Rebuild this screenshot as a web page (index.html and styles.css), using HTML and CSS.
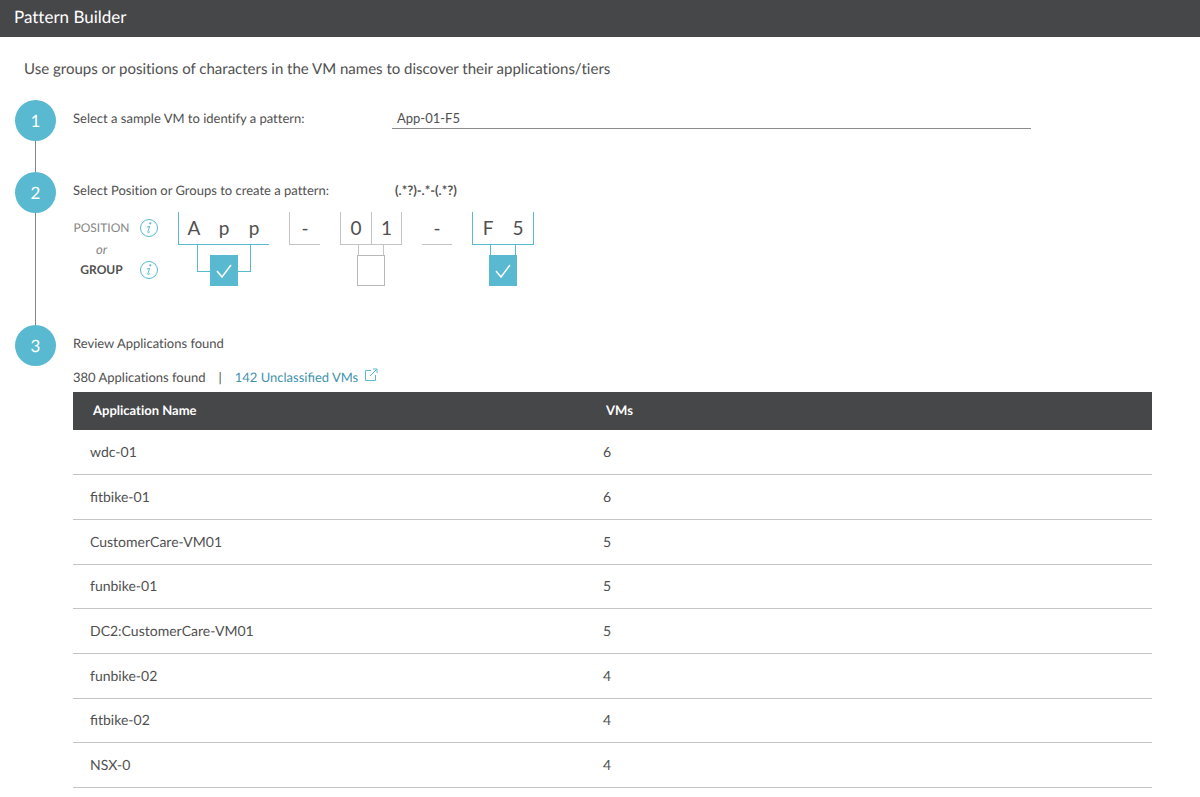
FILE: index.html
```html
<!DOCTYPE html>
<html lang="en">
<head>
<meta charset="utf-8">
<meta name="viewport" content="width=device-width, initial-scale=1">
<title>Pattern Builder</title>
<link rel="stylesheet" href="styles.css">
</head>
<body>
<header class="titlebar"><h1 class="title">Pattern Builder</h1></header>
<main class="page">
  <p class="intro">Use groups or positions of characters in the VM names to discover their applications/tiers</p>

  <section class="step step-sample">
    <div class="rail"><span class="badge">1</span><span class="line"></span></div>
    <div class="body pair">
      <label class="label" for="sample">Select a sample VM to identify a pattern:</label>
      <input class="field" id="sample" type="text" value="App-01-F5">
    </div>
  </section>

  <section class="step step-pattern">
    <div class="rail"><span class="badge">2</span><span class="line"></span></div>
    <div class="body">
      <div class="pair">
        <h2 class="label">Select Position or Groups to create a pattern:</h2>
        <output class="regex">(.*?)-.*-(.*?)</output>
      </div>
      <div class="builder">
        <div class="legend">
          <span class="mode">POSITION</span>
          <button class="info" type="button" aria-label="About positions">
            <svg width="20" height="20" viewBox="0 0 20 20"><circle cx="10" cy="10" r="8.5"/><path class="dot" d="M11.4 4.2a1.1 1.1 0 1 1-.1 2.2 1.1 1.1 0 0 1 .1-2.2z"/><path class="stem" d="M7.8 9.1l2.8-.7-1.7 5.4c-.2 1.3.8.9 2.2-.5"/></svg>
          </button>
          <span class="mode mode-or">or</span><span></span>
          <span class="mode mode-group">GROUP</span>
          <button class="info" type="button" aria-label="About groups">
            <svg width="20" height="20" viewBox="0 0 20 20"><circle cx="10" cy="10" r="8.5"/><path class="dot" d="M11.4 4.2a1.1 1.1 0 1 1-.1 2.2 1.1 1.1 0 0 1 .1-2.2z"/><path class="stem" d="M7.8 9.1l2.8-.7-1.7 5.4c-.2 1.3.8.9 2.2-.5"/></svg>
          </button>
        </div>
        <div class="groups">
          <div class="group selected">
            <div class="chars"><button class="char" type="button">A</button><button class="char" type="button">p</button><button class="char" type="button">p</button></div>
            <div class="picker">
              <span class="bracket bracket-wide"></span>
              <input class="check" type="checkbox" aria-label="Group App" checked>
              <svg class="tick" width="16" height="14" viewBox="0 0 16 14"><path d="M1 7l5 6 9-12"/></svg>
            </div>
          </div>
          <div class="group"><div class="chars"><button class="char" type="button">-</button></div></div>
          <div class="group">
            <div class="chars closed split"><button class="char" type="button">0</button><button class="char" type="button">1</button></div>
            <div class="picker">
              <span class="bracket"></span>
              <input class="check" type="checkbox" aria-label="Group 01">
            </div>
          </div>
          <div class="group"><div class="chars bare"><button class="char" type="button">-</button></div></div>
          <div class="group selected">
            <div class="chars closed"><button class="char" type="button">F</button><button class="char" type="button">5</button></div>
            <div class="picker">
              <span class="bracket"></span>
              <input class="check" type="checkbox" aria-label="Group F5" checked>
              <svg class="tick" width="16" height="14" viewBox="0 0 16 14"><path d="M1 7l5 6 9-12"/></svg>
            </div>
          </div>
        </div>
      </div>
    </div>
  </section>

  <section class="step">
    <div class="rail"><span class="badge">3</span></div>
    <div class="body">
      <h2 class="label">Review Applications found</h2>
      <div class="summary">
        <span>380 Applications found</span><span>|</span>
        <a class="link" href="#">142 Unclassified VMs
          <svg width="14" height="14" viewBox="0 0 14 14"><path d="M7 2.5H1.5v10h10V7M6 8l6.5-6.5M9 1h4v4"/></svg></a>
      </div>
      <table class="apps">
        <thead><tr><th>Application Name</th><th>VMs</th></tr></thead>
        <tbody>
          <tr><td>wdc-01</td><td>6</td></tr>
          <tr><td>fitbike-01</td><td>6</td></tr>
          <tr><td>CustomerCare-VM01</td><td>5</td></tr>
          <tr><td>funbike-01</td><td>5</td></tr>
          <tr><td>DC2:CustomerCare-VM01</td><td>5</td></tr>
          <tr><td>funbike-02</td><td>4</td></tr>
          <tr><td>fitbike-02</td><td>4</td></tr>
          <tr><td>NSX-0</td><td>4</td></tr>
        </tbody>
      </table>
    </div>
  </section>
</main>
</body>
</html>
```
FILE: styles.css
```css
:root {
  --accent: #59b9d1;
  --bar: #464749;
  --text: #505050;
  --rule: #c4c4c4;
}
* { box-sizing: border-box; }
body {
  margin: 0;
  background: #fff;
  color: var(--text);
  font: 13px/20px Lato, "Open Sans", sans-serif;
  font-variant-ligatures: none;
  text-rendering: geometricPrecision;
}
h1, h2, p { margin: 0; font-weight: 400; }
button { padding: 0; border: 0; background: none; font: inherit; color: inherit; cursor: pointer; }

.titlebar { padding: 7px 14px 10px; background: var(--bar); color: #fff; }
.title { font-size: 17px; line-height: 20px; }
.page { padding: 22px 48px 0 15px; }
.intro { padding-left: 9px; margin-bottom: 21px; font-size: 15px; }

.step { display: grid; grid-template-columns: 41px minmax(0, 1fr); column-gap: 17px; }
.step-sample { min-height: 72px; }
.step-pattern { min-height: 153px; }
.rail { display: flex; flex-direction: column; align-items: center; }
.badge {
  display: grid;
  place-items: center;
  width: 41px;
  height: 41px;
  border-radius: 50%;
  background: var(--accent);
  color: #fff;
  font-size: 17px;
}
.line { flex: 1; width: 1px; background: #858585; }
.body { padding-top: 8px; }
.label { font-size: 13px; }
.pair { display: grid; grid-template-columns: 319px minmax(0, 1fr); align-items: start; }
.field {
  width: calc(100% - 121px);
  height: 21px;
  padding: 0 5px 1px;
  border: 0;
  border-bottom: 1px solid #8c8c8c;
  background: none;
  color: inherit;
  font: inherit;
  outline: 0;
}
.regex { padding-left: 3px; font-weight: 700; }

.builder { display: flex; margin-top: 12px; }
.legend {
  display: grid;
  grid-template-columns: 57px 20px;
  grid-auto-rows: 21px;
  column-gap: 9px;
  width: 105px;
  padding-top: 5px;
  align-items: center;
}
.mode { color: #858585; font-size: 12px; text-align: center; }
.mode-or { font-size: 13px; font-style: italic; }
.mode-group { color: var(--text); font-weight: 700; }
.info { display: block; height: 20px; }
.info svg { display: block; fill: none; stroke: var(--accent); }
.info .dot { fill: var(--accent); stroke: none; }

.groups { display: flex; align-items: flex-start; gap: 20px; }
.chars { display: flex; border: solid var(--rule); border-width: 0 0 1px 1px; }
.chars.closed { border-right-width: 1px; }
.chars.bare { border-left-width: 0; }
.split .char + .char { border-left: 1px solid var(--rule); }
.selected .chars { border-color: var(--accent); }
.char { width: 30px; height: 32px; font-size: 19px; line-height: 32px; }
.picker { display: grid; justify-items: center; }
.picker > * { grid-area: 1 / 1; }
.bracket { width: 26px; height: 11px; border: solid var(--rule); border-width: 0 1px; }
.bracket-wide { width: 54px; height: 27px; }
.selected .bracket { border-color: var(--accent); }
.selected .bracket-wide { border-bottom-width: 1px; }
.check {
  appearance: none;
  width: 28px;
  height: 31px;
  margin: 10px 0 0;
  border: 1px solid #b8b8b8;
  background: #fff;
}
.check:checked { border-color: var(--accent); background: var(--accent); }
.tick { margin-top: 19px; fill: none; stroke: #fff; stroke-width: 1.5; pointer-events: none; }

.summary { display: flex; gap: 13px; margin: 14px 0 5px; }
.link { color: #3f93ab; text-decoration: none; font-variant-ligatures: normal; }
.link svg { margin-left: 2px; fill: none; stroke: var(--accent); }

.apps { width: 100%; border-collapse: collapse; table-layout: fixed; }
.apps th { height: 38px; padding: 0 20px 2px; background: var(--bar); color: #fff; text-align: left; font-weight: 700; }
.apps th:first-child { width: 513px; }
.apps td { height: 45px; padding: 0 17px; border-bottom: 1px solid var(--rule); font-size: 14px; font-variant-ligatures: normal; }
.apps tr:nth-child(3n + 1) td { height: 44px; }
```
